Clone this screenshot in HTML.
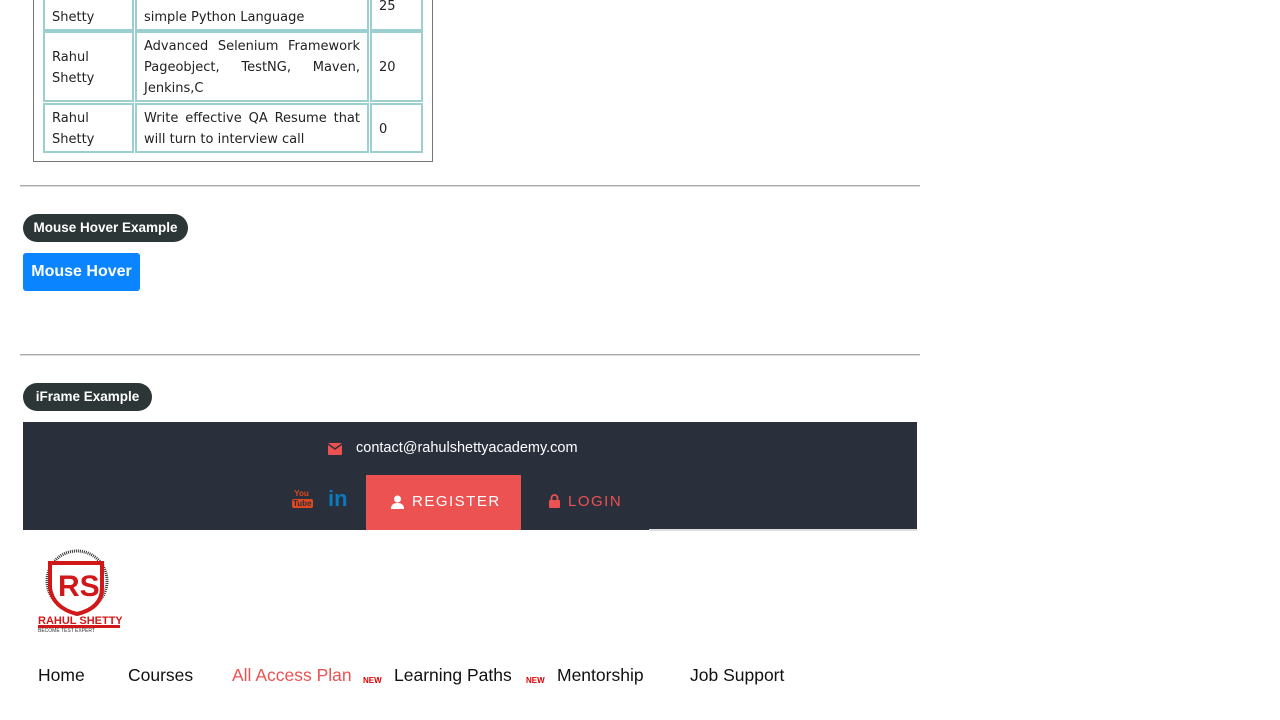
<!DOCTYPE html>
<html><head><style>
body{margin:0;width:1280px;height:720px;overflow:hidden;background:#fff;font-family:"DejaVu Sans","Liberation Sans",sans-serif;position:relative}
.a{position:absolute}
.cell{position:absolute;border:2px solid #9ccfd0;box-sizing:border-box;font-size:13px;color:#222;padding:6px 7px;line-height:21px}
.hr{position:absolute;left:20px;width:900px;height:1px;background:#aaa;border-bottom:1px solid #ddd}
.pill{position:absolute;background:#2d3636;color:#fff;font-size:13.5px;font-weight:bold;border-radius:14px;height:28px;line-height:28px;text-align:center;white-space:nowrap;box-sizing:border-box;font-family:"Liberation Sans",sans-serif}
.nav{position:absolute;top:665px;font-family:"Liberation Sans",sans-serif;font-size:17.5px;color:#111;white-space:nowrap}
.new{position:absolute;top:676px;font-size:8px;font-weight:bold;color:#e10000;font-family:"Liberation Sans",sans-serif}
</style></head><body>
<div class="a" style="left:33px;top:-4px;width:400px;height:166px;border:1px solid #777;border-top:none;box-sizing:border-box"></div>
<div class="cell" style="left:43px;top:-20px;width:91px;height:51px;padding-top:25px">Shetty</div>
<div class="cell" style="left:135px;top:-20px;width:234px;height:51px;padding-top:25px">simple Python Language</div>
<div class="cell" style="left:370px;top:-20px;width:53px;height:51px;padding-top:14px">25</div>
<div class="cell" style="left:43px;top:31px;width:91px;height:71px;padding-top:14px">Rahul<br>Shetty</div>
<div class="cell" style="left:135px;top:31px;width:234px;height:71px;padding-top:3px;text-align:justify">Advanced Selenium Framework Pageobject, TestNG, Maven, Jenkins,C</div>
<div class="cell" style="left:370px;top:31px;width:53px;height:71px;padding-top:24px">20</div>
<div class="cell" style="left:43px;top:103px;width:91px;height:50px;padding-top:3px">Rahul<br>Shetty</div>
<div class="cell" style="left:135px;top:103px;width:234px;height:50px;padding-top:3px;text-align:justify">Write effective QA Resume that will turn to interview call</div>
<div class="cell" style="left:370px;top:103px;width:53px;height:50px;padding-top:14px">0</div>
<div class="hr" style="top:185px"></div>
<div class="pill" style="left:23px;top:214px;width:165px">Mouse Hover Example</div>
<div class="a" style="left:23px;top:253px;width:117px;height:38px;background:#0a84ff;border-radius:3px;color:#fff;font-size:16px;line-height:38px;text-align:center;font-weight:bold;white-space:nowrap;font-family:'Liberation Sans',sans-serif">Mouse Hover</div>
<div class="hr" style="top:354px"></div>
<div class="pill" style="left:23px;top:383px;width:129px">iFrame Example</div>
<div class="a" style="left:23px;top:422px;width:894px;height:108px;background:#292f3b"></div>
<div class="a" style="left:649px;top:529px;width:268px;height:2px;background:#ddd"></div>
<svg class="a" style="left:328px;top:443px" width="14" height="12" viewBox="0 0 14 12"><rect width="14" height="12" rx="1" fill="#ec5252"/><path d="M0 1 L7 6 L14 1" stroke="#292f3b" stroke-width="1.5" fill="none"/></svg>
<div class="a" style="left:356px;top:440px;color:#fff;font-size:14.5px;font-family:'Liberation Sans',sans-serif">contact@rahulshettyacademy.com</div>
<div class="a" style="left:292px;top:489px;width:19px;height:22px;font-size:8px;color:#e0481f;font-weight:bold;line-height:10px;text-align:center;font-family:'Liberation Sans',sans-serif">You<br><span style="background:#e0481f;color:#292f3b;border-radius:2px;padding:0 1px">Tube</span></div>
<div class="a" style="left:328px;top:486px;color:#0a7ac0;font-size:22px;font-weight:bold;font-family:'Liberation Sans',sans-serif">in</div>
<div class="a" style="left:366px;top:475px;width:155px;height:55px;background:#ec5252"></div>
<svg class="a" style="left:391px;top:495px" width="13" height="14" viewBox="0 0 13 14"><circle cx="6.5" cy="4" r="3.5" fill="#fff"/><path d="M0 14 Q0 8 6.5 8 Q13 8 13 14Z" fill="#fff"/></svg>
<div class="a" style="left:412px;top:493px;color:#fff;font-size:15px;letter-spacing:1.5px;font-family:'Liberation Sans',sans-serif">REGISTER</div>
<svg class="a" style="left:549px;top:494px" width="11" height="14" viewBox="0 0 11 14"><path d="M2.5 6V4a3 3 0 0 1 6 0v2" stroke="#ec5252" stroke-width="1.8" fill="none"/><rect y="6" width="11" height="8" rx="1" fill="#ec5252"/></svg>
<div class="a" style="left:568px;top:493px;color:#ec5252;font-size:15px;letter-spacing:1.5px;font-family:'Liberation Sans',sans-serif">LOGIN</div>
<svg class="a" style="left:36px;top:548px" width="86" height="84" viewBox="0 0 86 84">
<circle cx="41" cy="33" r="30" fill="none" stroke="#333" stroke-width="3" stroke-dasharray="1 1"/>
<path d="M14 15 H66 V40 Q66 60 41 66 Q17 60 14 40Z" fill="#fff" stroke="#d01818" stroke-width="4"/>
<text x="22" y="48" font-family="Liberation Sans" font-weight="bold" font-size="30" fill="#d01818">RS</text>
<text x="2" y="76" font-family="Liberation Sans" font-weight="bold" font-size="11" fill="#d01818">RAHUL SHETTY</text>
<rect x="2" y="77" width="82" height="3" fill="#d01818"/>
<text x="2" y="84" font-family="Liberation Sans" font-size="5" fill="#333">BECOME TEST EXPERT</text>
</svg>
<div class="nav" style="left:38px">Home</div>
<div class="nav" style="left:128px">Courses</div>
<div class="nav" style="left:232px;color:#ec5252">All Access Plan</div>
<div class="new" style="left:363px">NEW</div>
<div class="nav" style="left:394px">Learning Paths</div>
<div class="new" style="left:526px">NEW</div>
<div class="nav" style="left:557px">Mentorship</div>
<div class="nav" style="left:690px">Job Support</div>
</body></html>
